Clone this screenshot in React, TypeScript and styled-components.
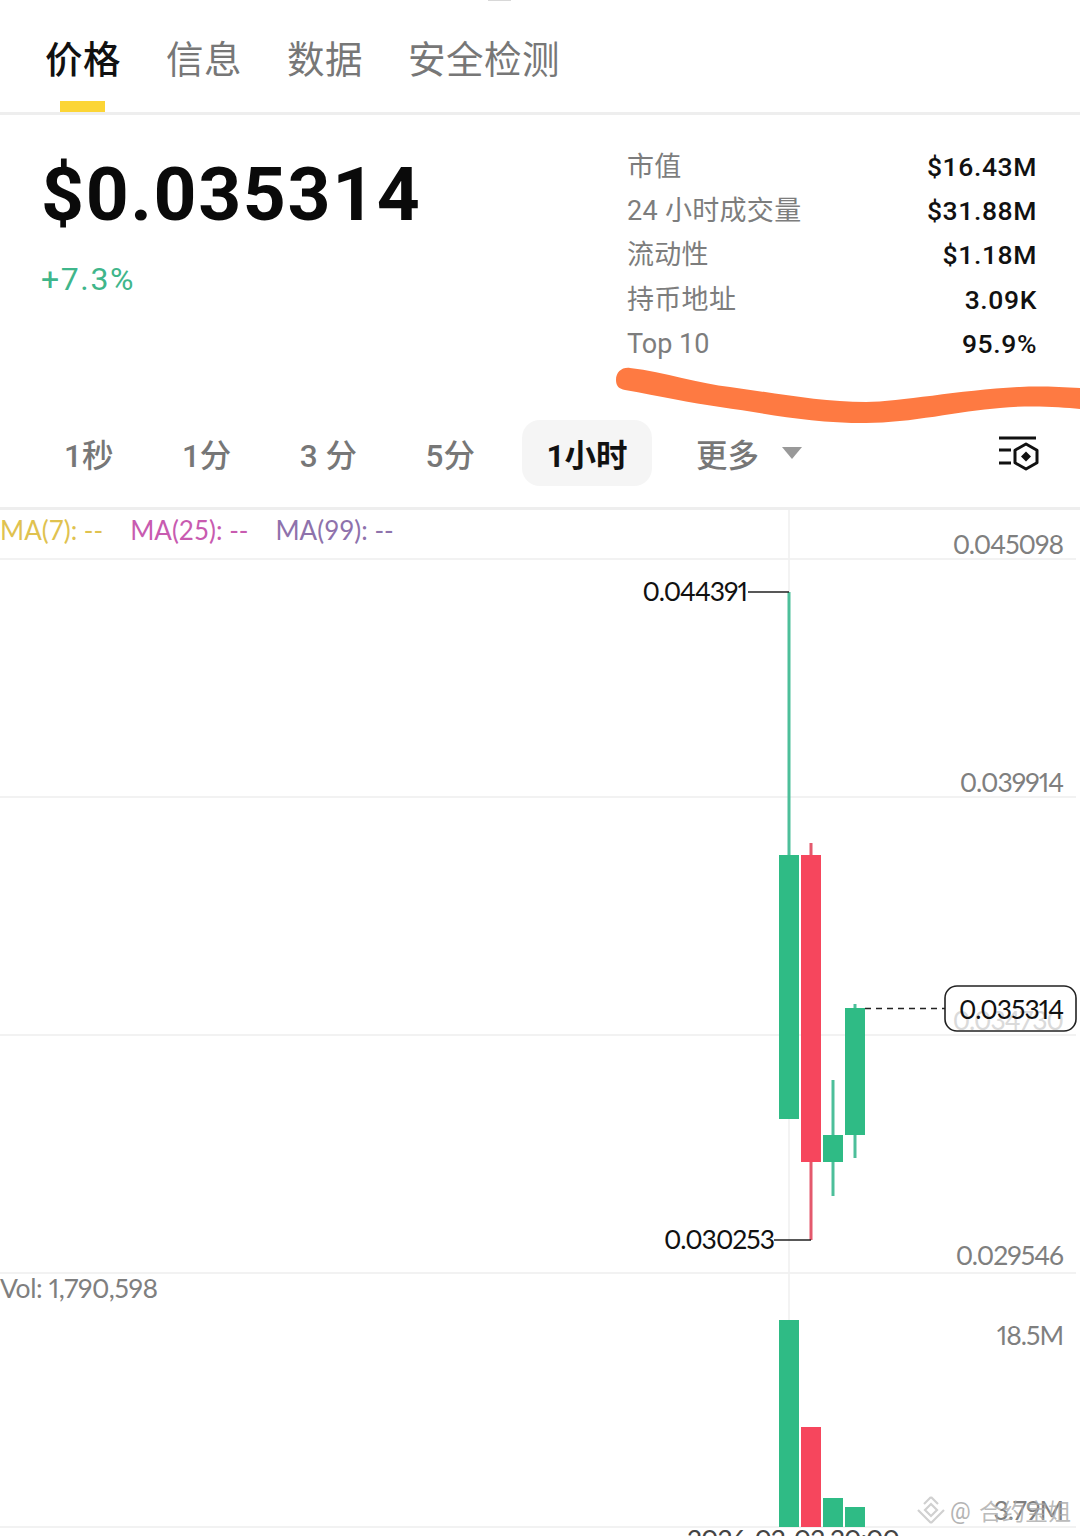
import React from "react";
import styled, { createGlobalStyle } from "styled-components";

const sans = `Roboto, "Noto Sans CJK SC", sans-serif`;
const GlobalStyle = createGlobalStyle`
  html, body { margin: 0; padding: 0; background: #fff; }
  body { font-family: ${sans}; width: 1080px; height: 1536px; overflow: hidden; }
`;
const Page = styled.div`
  position: relative;
  width: 1080px;
  height: 1536px;
  overflow: hidden;
  background: #fff;
`;
const TabBar = styled.nav`
  position: relative;
  display: flex;
  gap: 45px;
  height: 112px;
  padding-left: 45px;
  border-bottom: 3px solid #eeeeee;
`;
const Handle = styled.i`
  position: absolute;
  left: 488px;
  top: 0;
  width: 23px;
  height: 1px;
  background: #d8d8d8;
`;
const Tab = styled.span<{ $active?: boolean }>`
  position: relative;
  height: 112px;
  line-height: 120px;
  font-size: 37.5px;
  letter-spacing: 0.5px;
  font-weight: ${(p) => (p.$active ? 500 : 400)};
  color: ${(p) => (p.$active ? "#111" : "#777")};
  ${(p) =>
    p.$active &&
    `&::after { content: ""; position: absolute; left: 15px; bottom: 0; width: 45px; height: 11px; background: #fcd535; }`}
`;
const Summary = styled.section`
  display: flex;
  justify-content: space-between;
  height: 303px;
  box-sizing: border-box;
  padding: 28px 43px 0 41px;
`;
const PriceBlock = styled.div`
  display: flex;
  flex-direction: column;
  padding-top: 5px;
`;
const Price = styled.div`
  font-size: 75px;
  line-height: 92px;
  font-weight: 700;
  letter-spacing: 1.6px;
  color: #0a0a0a;
`;
const Change = styled.div`
  margin-top: 21px;
  font-size: 32px;
  line-height: 36px;
  letter-spacing: 1.6px;
  color: #3fb68b;
`;
const Stats = styled.dl`
  margin: 0;
  width: 410px;
  display: grid;
  grid-template-columns: 1fr auto;
  grid-auto-rows: 44.4px;
  align-items: center;
`;
const StatLabel = styled.dt<{ $latin?: boolean }>`
  font-size: 27px;
  color: #7d7d7d;
  letter-spacing: ${(p) => (p.$latin ? "0" : "0.3px")};
  padding: ${(p) => (p.$latin ? "3px 0 0" : "0 0 2px")};
`;
const StatValue = styled.dd`
  margin: 0;
  padding-top: 2px;
  font-size: 26.5px;
  font-weight: 500;
  letter-spacing: 0.6px;
  text-align: right;
  color: #111;
`;
const Frames = styled.div`
  display: flex;
  align-items: center;
  gap: 20.5px;
  height: 89px;
  padding: 0 42px 0 40px;
  border-bottom: 3px solid #eeeeee;
`;
const Frame = styled.button<{ $active?: boolean }>`
  display: flex;
  align-items: center;
  gap: 23px;
  height: 66px;
  margin-top: -20px;
  margin-left: ${(p) => (p.$active ? "3px" : "0")};
  padding: 0 24px;
  border: 0;
  border-radius: 18px;
  font-family: ${sans};
  font-size: 31.5px;
  font-weight: ${(p) => (p.$active ? 700 : 500)};
  color: ${(p) => (p.$active ? "#111" : "#777")};
  background: ${(p) => (p.$active ? "#f5f5f5" : "transparent")};
`;
const Caret = styled.i`
  width: 0;
  height: 0;
  border-left: 10px solid transparent;
  border-right: 10px solid transparent;
  border-top: 12px solid #999;
  margin-top: 1px;
`;
const SettingsIcon = styled.svg`
  margin-left: auto;
  margin-top: -17px;
  flex: none;
  overflow: visible;
`;
const Chart = styled.div`
  position: relative;
  height: 1026px;
`;
const Legend = styled.div`
  position: absolute;
  left: 0;
  top: 3px;
  display: flex;
  gap: 27px;
  font-family: Lato, Roboto, sans-serif;
  font-size: 26px;
  line-height: 34px;
`;
const Ma = styled.span<{ $c: string }>`
  color: ${(p) => p.$c};
`;
const Plot = styled.svg`
  display: block;
  position: absolute;
  left: 0;
  top: 0;
  font-family: Lato, Roboto, sans-serif;
  font-variant-numeric: proportional-nums;
  font-feature-settings: "pnum" 1;
  letter-spacing: -1px;
`;
const Scribble = styled.svg`
  position: absolute;
  left: 0;
  top: 0;
  pointer-events: none;
`;

const rows = [
  ["市值", "$16.43M"],
  ["24 小时成交量", "$31.88M"],
  ["流动性", "$1.18M"],
  ["持币地址", "3.09K"],
  ["Top 10", "95.9%"],
];
const GREEN = "#2fbb85";
const RED = "#f6465d";
const Y0 = 510;
const gridYs = [559, 797, 1035, 1273, 1527];

export default function App() {
  return (
    <Page>
      <GlobalStyle />
      <TabBar>
        <Handle />
        <Tab $active>价格</Tab>
        <Tab>信息</Tab>
        <Tab>数据</Tab>
        <Tab>安全检测</Tab>
      </TabBar>
      <Summary>
        <PriceBlock>
          <Price>$0.035314</Price>
          <Change>+7.3%</Change>
        </PriceBlock>
        <Stats>
          {rows.map(([k, v]) => (
            <React.Fragment key={k}>
              <StatLabel $latin={k === "Top 10"}>{k}</StatLabel>
              <StatValue>{v}</StatValue>
            </React.Fragment>
          ))}
        </Stats>
      </Summary>
      <Frames>
        <Frame>1秒</Frame>
        <Frame>1分</Frame>
        <Frame>3 分</Frame>
        <Frame>5分</Frame>
        <Frame $active>1小时</Frame>
        <Frame>
          更多
          <Caret />
        </Frame>
        <SettingsIcon width="40" height="36" viewBox="0 0 40 36" fill="none" stroke="#111" strokeWidth="3">
          <path d="M1 2h37M1 14h12M1 27h12" />
          <path d="M28 8l11 6.200v12.600l-11 6.200-11-6.200V14.200z" strokeLinejoin="round" />
          <path d="M28 15.500l5 5-5 5-5-5z" fill="#111" stroke="none" />
        </SettingsIcon>
      </Frames>
      <Chart>
        <Plot width="1080" height="1026" viewBox={`0 ${Y0} 1080 1026`}>
          {gridYs.map((y) => (
            <line key={y} x1="0" x2="1076" y1={y} y2={y} stroke="#eeeeee" strokeWidth="1.6" />
          ))}
          <line x1="789" x2="789" y1={Y0} y2="1527" stroke="#f0f0f0" strokeWidth="1.6" />

          <g fontSize="26.500" fill="#7f7f7f" textAnchor="end">
            <text x="1063" y="554">0.045098</text>
            <text x="1063" y="792">0.039914</text>
            <text x="1063" y="1030" fill="#dadada">0.034730</text>
            <text x="1063" y="1265">0.029546</text>
            <text x="1063" y="1345">18.5M</text>
            <text x="1063" y="1520">3.79M</text>
          </g>
          <text x="0" y="1298" fontSize="26.500" fill="#7f7f7f" letterSpacing="-0.400">Vol: 1,790,598</text>

          <path d="M789 592V855" stroke="#4dbf9a" strokeWidth="3" />
          <rect x="779" y="855" width="20" height="264" fill={GREEN} />
          <path d="M811 843V1240" stroke="#e4596d" strokeWidth="3" />
          <rect x="801" y="855" width="20" height="307" fill={RED} />
          <path d="M833 1080V1196" stroke="#4dbf9a" strokeWidth="3" />
          <rect x="823" y="1135" width="20" height="27" fill={GREEN} />
          <path d="M855 1004V1158" stroke="#4dbf9a" strokeWidth="3" />
          <rect x="845" y="1008" width="20" height="127" fill={GREEN} />

          <rect x="779" y="1320" width="20" height="207" fill={GREEN} />
          <rect x="801" y="1427" width="20" height="100" fill={RED} />
          <rect x="823" y="1498" width="20" height="29" fill={GREEN} />
          <rect x="845" y="1507" width="20" height="20" fill={GREEN} />

          <path d="M748 592H789M774 1240H811" stroke="#222" strokeWidth="1.6" fill="none" />
          <g fontSize="26.500" fill="#111" textAnchor="end">
            <text x="747" y="601">0.044391</text>
            <text x="774" y="1249">0.030253</text>
          </g>

          <path d="M865 1008.500H945" stroke="#222" strokeWidth="1.5" strokeDasharray="6 5" />
          <rect x="945" y="986" width="131" height="45" rx="12" fill="none" stroke="#222" strokeWidth="1.6" />
          <text x="1063" y="1019" fontSize="26.500" fill="#111" textAnchor="end">0.035314</text>

          <text x="793" y="1549" fontSize="26.500" fill="#444" textAnchor="middle">2026-02-02 20:00</text>

          <g fill="none" stroke="#d0d0d0" strokeWidth="2.2">
            <path d="M931 1497l7 7M931 1497l-7 7M918 1510l6 6M944 1510l-6 6M931 1523l7-7M931 1523l-7-7" />
            <path d="M931 1504l6 6-6 6-6-6z" />
          </g>
          <text x="950" y="1519" fontSize="23" fill="#b4b4b4" letterSpacing="0" style={{ fontFamily: sans }}>@</text>
          <text x="979" y="1520" fontSize="23" fill="#a8a8a8" fillOpacity="0.8" letterSpacing="0" style={{ fontFamily: sans }}>合约宝姐</text>
        </Plot>
        <Legend>
          <Ma $c="#e0c24f">MA(7): --</Ma>
          <Ma $c="#c85bb0">MA(25): --</Ma>
          <Ma $c="#8e72ac">MA(99): --</Ma>
        </Legend>
      </Chart>
      <Scribble width="1080" height="1536" viewBox="0 0 1080 1536">
        <path
          d="M616 380C616 372 622 367 630 368C665 372 700 384 730 387C775 393 820 402 866 402C900 402 960 390 1020 387C1040 386 1060 387 1080 388V409C1060 407 1030 405 1000 408C960 411 910 423 866 423C810 423 770 414 720 407C690 403 660 396 625 390C619 389 616 386 616 380Z"
          fill="#fe7a42"
        />
      </Scribble>
    </Page>
  );
}
